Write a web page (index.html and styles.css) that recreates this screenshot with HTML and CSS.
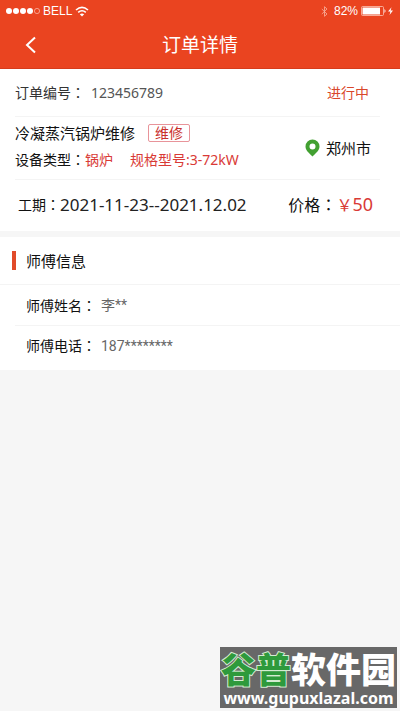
FILE: index.html
```html
<!DOCTYPE html>
<html lang="zh-CN">
<head>
<meta charset="utf-8">
<meta name="viewport" content="width=device-width, initial-scale=1">
<title>订单详情</title>
<link rel="stylesheet" href="styles.css">
</head>
<body>
<header class="header">
  <div class="status">
    <div class="status-group">
      <svg width="35" height="8" viewBox="0 0 35 8" aria-hidden="true">
        <g fill="#fff"><circle cx="3" cy="4" r="3"/><circle cx="10" cy="4" r="3"/><circle cx="17" cy="4" r="3"/><circle cx="24" cy="4" r="3"/></g>
        <circle cx="31" cy="4" r="2.6" fill="none" stroke="#fbc4b5" stroke-width=".7"/>
      </svg>
      <span class="carrier">BELL</span>
      <svg class="wifi" width="14" height="11" viewBox="0 0 14 11" fill="none" stroke="#fff" stroke-width="1.6" aria-hidden="true">
        <path d="M1 4Q7-1.4 13 4M3.2 6.4Q7 3.1 10.8 6.4"/><path d="M4.8 8.2Q7 6.6 9.2 8.2L7 10.6Z" fill="#fff" stroke="none"/>
      </svg>
    </div>
    <div class="status-group">
      <svg width="7" height="11" viewBox="0 0 7 11" fill="none" stroke="#f9b3a0" stroke-width=".8" aria-hidden="true"><path d="M.8 3L6 8 3.5 10.3V.7L6 3 .8 8"/></svg>
      <span class="percent">82%</span>
      <svg class="battery" width="33" height="10" viewBox="0 0 33 10" aria-hidden="true">
        <rect x=".5" y=".5" width="22" height="9" rx="1" fill="none" stroke="#fbc4b5" stroke-width=".8"/>
        <path d="M1.5 1.5H19V8.500H1.500Z" fill="#fff"/><path d="M23.500 3Q25.500 5 23.500 7Z" fill="#fff"/>
        <path d="M30.500 1.200L27 5.600H29.400L28.500 9 32 4.400H29.600Z" fill="#fff"/>
      </svg>
    </div>
  </div>
  <div class="navbar">
    <button class="back" type="button" aria-label="返回">
      <svg width="12" height="18" viewBox="0 0 12 18" fill="none" stroke="#fff" stroke-width="2" aria-hidden="true"><path d="M10 1.500L2 9l8 7.500"/></svg>
    </button>
    <h1 class="title">订单详情</h1>
  </div>
</header>
<main>
  <section class="order">
    <div class="row order-number">
      <div class="pair"><span class="label">订单编号<span class="colon">：</span></span><span class="number">123456789</span></div>
      <span class="state">进行中</span>
    </div>
    <div class="row device">
      <div class="device-text">
        <div class="device-line"><h2 class="device-name">冷凝蒸汽锅炉维修</h2><span class="tag">维修</span></div>
        <div class="device-line spec"><span>设备类型<span class="colon">：</span><span class="red">锅炉</span></span><span class="red model">规格型号:3-72kW</span></div>
      </div>
      <div class="place">
        <svg width="15" height="18" viewBox="0 0 15 18" aria-hidden="true"><path fill="#42a031" fill-rule="evenodd" d="M7.500.5A7 7 0 0 0 .5 7.500C.5 11.500 4 14 7.500 17.500 11 14 14.500 11.500 14.500 7.500A7 7 0 0 0 7.500.5ZM7.500 4.500A3 3 0 1 1 7.500 10.500 3 3 0 0 1 7.500 4.500Z"/></svg>
        <span>郑州市</span>
      </div>
    </div>
    <div class="row terms">
      <div class="pair period"><span>工期<span class="colon">：</span></span><span class="dates">2021-11-23--2021.12.02</span></div>
      <div class="pair price"><span>价格<span class="colon">：</span></span><span class="amount"><span class="yen">￥</span>50</span></div>
    </div>
  </section>
  <section class="worker">
    <h2 class="section-title">师傅信息</h2>
    <div class="info"><span>师傅姓名<span class="colon">：</span></span><span class="masked">李**</span></div>
    <div class="info"><span>师傅电话<span class="colon">：</span></span><span class="masked">187********</span></div>
  </section>
</main>
<footer class="watermark">
  <div class="brand"><span class="brand-green">谷普</span>软件园</div>
  <div class="site">www.gupuxlazal.com</div>
</footer>
</body>
</html>
```
FILE: styles.css
```css
* { box-sizing: border-box; }
body {
  margin: 0;
  min-height: 100vh;
  display: flex;
  flex-direction: column;
  background: #f6f6f6;
  color: #111;
  font: 14px/20px "Noto Sans", "Noto Sans CJK SC", sans-serif;
}
h1, h2 { margin: 0; font-weight: 400; }
svg { display: block; flex: none; }
.header { background: #ea4420; color: #fff; border-bottom: 1px solid #d63c1b; }
.status {
  display: flex;
  justify-content: space-between;
  height: 22px;
  padding: 0 6px;
  font: 12px/22px "Liberation Sans", sans-serif;
}
.status-group { display: flex; align-items: center; }
.carrier { margin: 0 3px 0 2px; }
.percent { margin: 0 3px 0 6px; font-size: 12px; }
.navbar {
  display: grid;
  grid-template-columns: 60px 1fr 60px;
  align-items: center;
  height: 46px;
}
.back { padding: 0 0 0 25px; height: 46px; border: 0; background: none; }
.title { font-size: 19px; line-height: 46px; text-align: center; }
/* Full-width colon centred in its cell */
.colon { font-family: "Noto Sans CJK JP", sans-serif; font-feature-settings: "locl" 0; }
.order { background: #fff; }
.row {
  display: flex;
  align-items: center;
  justify-content: space-between;
  margin: 0 20px 0 15px;
  border-bottom: 1px solid #f4f4f4;
}
.pair { display: flex; align-items: center; }
.order-number { height: 48px; color: #333; }
.number { margin-left: 6px; color: #555; }
.state { padding-right: 11px; color: #d9472b; }
.device { height: 63px; }
.device-text { padding-bottom: 4px; }
.device-line { display: flex; align-items: center; gap: 13px; height: 27px; }
.device-name { font-size: 15px; }
.tag {
  padding: 0 6px;
  border: 1px solid #e8949a;
  border-radius: 2px;
  color: #c9302c;
  line-height: 16px;
}
.spec { gap: 17px; }
.red { color: #d93a36; }
.place { display: flex; align-items: center; gap: 6px; padding: 0 9px 0 0; font-size: 15px; }
.terms { height: 51px; padding-bottom: 2px; border: 0; }
.period { padding-left: 3px; }
.dates { font-size: 17px; color: #222; }
.price { padding-right: 7px; font-size: 16px; }
.amount { font-size: 18px; color: #d93a36; }
.yen { font-size: 16px; }
.worker { margin-top: 6px; padding-bottom: 5px; background: #fff; }
.section-title {
  display: flex;
  align-items: center;
  height: 48px;
  padding-left: 12px;
  border-bottom: 1px solid #f4f4f4;
  font-size: 15px;
}
.section-title::before { content: ""; width: 4px; height: 19px; margin-right: 10px; background: #e14b2a; }
.info {
  display: flex;
  align-items: center;
  gap: 5px;
  height: 40px;
  margin: 0 0 0 15px;
  padding-left: 11px;
}
.info + .info { border-top: 1px solid #f4f4f4; }
.masked { color: #666; font-family: Roboto, "Noto Sans CJK SC", sans-serif; }
.watermark {
  align-self: flex-end;
  margin: auto 3px 3px 0;
  padding: 0 1px;
  background: #686868;
  color: #fff;
  text-align: center;
  white-space: nowrap;
}
.brand { font: 900 35px/42px "Noto Sans CJK SC", sans-serif; }
.brand-green { color: #2e9a3c; -webkit-text-stroke: 2px #d4ecd2; paint-order: stroke fill; }
.site { font: 700 16px/19px "Noto Sans", sans-serif; }
```
